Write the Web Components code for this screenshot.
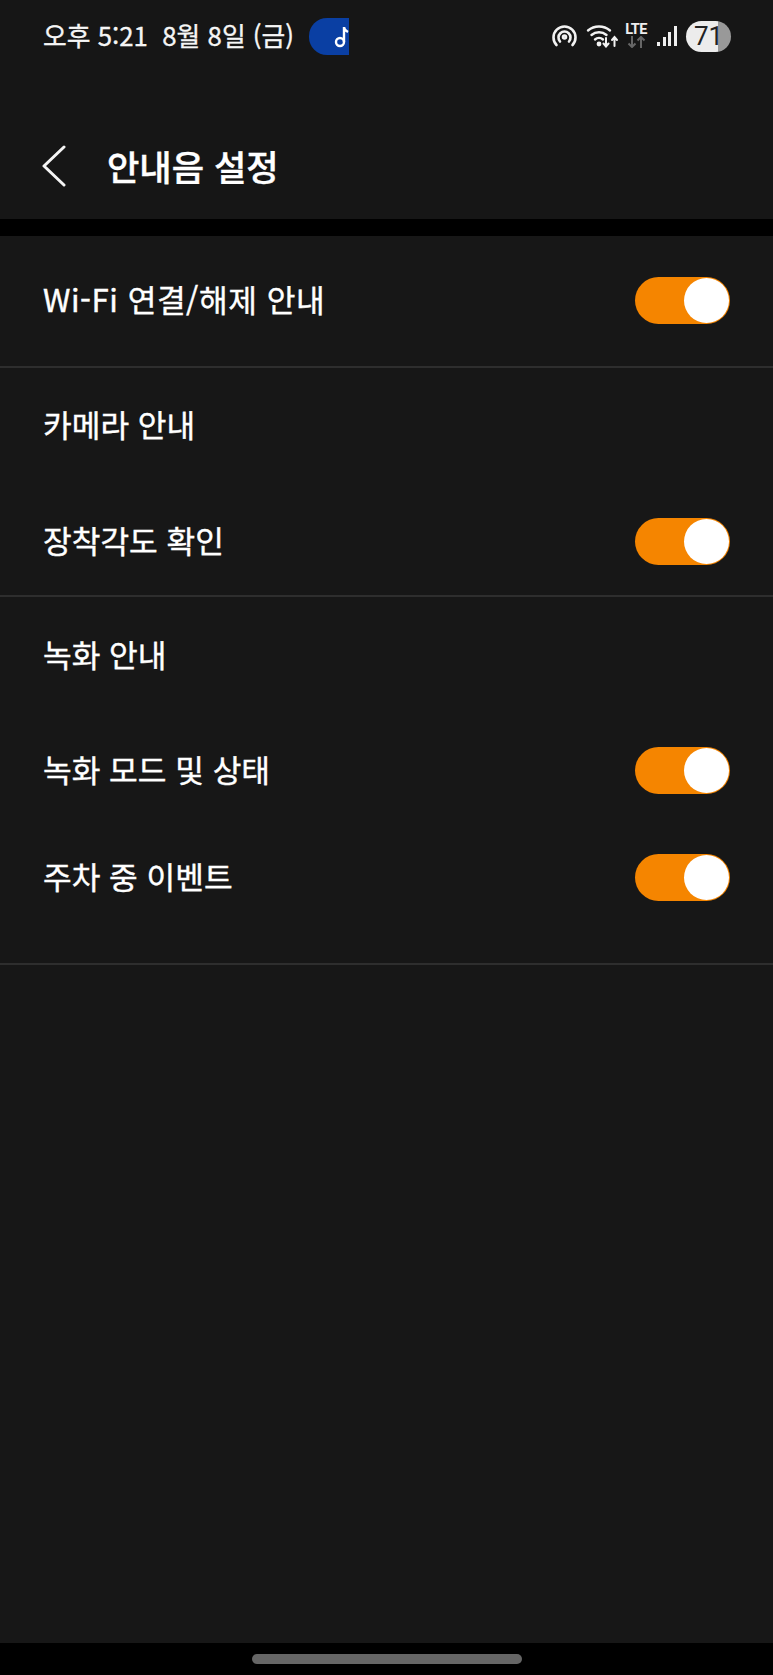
<!DOCTYPE html>
<html lang="ko">
<head>
<meta charset="utf-8">
<style>
  html, body { margin: 0; background: #000; }
  body { font-family: "Noto Sans CJK KR", "Noto Sans", sans-serif; color: #fff; }
  settings-screen { height: 1675px; }
</style>
</head>
<body>
<settings-screen>
  <status-bar slot="status"></status-bar>
  <app-bar slot="bar">안내음 설정</app-bar>
  <settings-group style="--h:130px">
    <setting-row label="Wi-Fi 연결/해제 안내" style="--row:129px;--ls:.55px"></setting-row>
  </settings-group>
  <settings-group style="--h:227px">
    <group-title style="--top:27px">카메라 안내</group-title>
    <setting-row label="장착각도 확인" style="--row:115px;--top:31px"></setting-row>
  </settings-group>
  <settings-group style="--h:366px">
    <group-title style="--top:28px">녹화 안내</group-title>
    <setting-row label="녹화 모드 및 상태" style="--row:109px;--top:33px"></setting-row>
    <setting-row label="주차 중 이벤트" style="--row:105px"></setting-row>
  </settings-group>
</settings-screen>
<script>
class SettingsScreen extends HTMLElement {
    constructor() {
        super();
        this.attachShadow({ mode: 'open' });
        this.shadowRoot.innerHTML = `
            <style>
                :host { display: flex; flex-direction: column; background: #000; }
                .top { height: 219px; background: #161616; display: flex; flex-direction: column; }
                .list { margin-top: 17px; flex: 1; background: #171717; display: flex; flex-direction: column; }
                .nav { height: 32px; background: #000; display: flex; justify-content: center; padding-top: 11px; box-sizing: border-box; }
                .pill { width: 270px; height: 10px; border-radius: 5px; background: #666; }
            </style>
            <div class="top"><slot name="status"></slot><slot name="bar"></slot></div>
            <div class="list"><slot></slot></div>
            <div class="nav"><div class="pill"></div></div>
        `;
    }
}

class StatusBar extends HTMLElement {
    constructor() {
        super();
        this.attachShadow({ mode: 'open' });
        this.shadowRoot.innerHTML = `
            <style>
                :host { display: flex; align-items: center; height: 72px; padding: 0 42px 0 43px; font-size: 25.8px; }
                .time { white-space: pre; -webkit-text-stroke: .3px #fff; color: #f4f4f4; line-height: 30px; padding-bottom: 2px; }
                .music { margin-left: 15px; width: 40px; height: 37px; border-radius: 18px 0 0 18px; background: #0a3fa3; display: flex; justify-content: flex-end; align-items: center; }
                .icons { margin-left: auto; display: flex; align-items: center; }
                svg { display: block; }
                .lte { width: 24px; height: 24px; margin-left: 5px; }
                .lte span { display: block; font: 700 14.5px/12px "Roboto", sans-serif; color: #eee; text-align: center; letter-spacing: -.6px; }
                .batt { margin-left: 9px; width: 45px; height: 31px; border-radius: 16px; overflow: hidden; background: linear-gradient(90deg, #ececec 0 32px, #999 32px); color: #222; font: 26px/31px "Roboto", sans-serif; text-align: center; }
            </style>
            <span class="time">오후 5:21  8월 8일 (금)</span>
            <div class="music">
                <svg width="17" height="24" viewBox="0 0 17 24" fill="none" stroke="#fff" stroke-width="2.4">
                    <circle cx="8" cy="18" r="4"/><path d="M12 18V3c0 3 2 4 4 5"/>
                </svg>
            </div>
            <div class="icons">
                <svg width="25" height="22" viewBox="0 0 25 22" fill="none" stroke="#f2f2f2" stroke-width="2.6" stroke-linecap="round">
                    <path d="M4.500 20A11 11 0 1 1 20.500 20"/><path d="M8 16.500a6 6 0 1 1 9 0"/><circle cx="12.500" cy="12" r="1.500"/>
                </svg>
                <svg width="34" height="24" viewBox="0 0 34 24" fill="none" stroke="#f2f2f2" stroke-width="2.4" stroke-linecap="round" style="margin-left:8px">
                    <path d="M3 6.500a17 17 0 0 1 22 0"/><path d="M6.500 11a11.500 11.500 0 0 1 15 0"/><path d="M10 15.500a6 6 0 0 1 8 0"/>
                    <circle cx="14" cy="20" r="1.200"/>
                    <path d="M21 14v8M18.500 19.500l2.500 3 2.500-3" stroke-width="2"/><path d="M29.500 22v-9M27 16l2.500-3 2.500 3" stroke-width="2"/>
                </svg>
                <div class="lte">
                    <span>LTE</span>
                    <svg width="24" height="12" viewBox="0 0 24 12" fill="none" stroke="#666" stroke-width="2">
                        <path d="M8 0v11M4.500 7.500 8 11l3.500-3.500"/><path d="M17 12V1M13.500 4.500 17 1l3.500 3.500"/>
                    </svg>
                </div>
                <svg width="21" height="24" viewBox="0 0 21 24" fill="#eee" style="margin-left:8px">
                    <rect x="1" y="18" width="3" height="4"/><rect x="7" y="13" width="3" height="9"/><rect x="12" y="8" width="3" height="14"/><rect x="18" y="2" width="3" height="20"/>
                </svg>
                <div class="batt">71</div>
            </div>
        `;
    }
}

class AppBar extends HTMLElement {
    constructor() {
        super();
        this.attachShadow({ mode: 'open' });
        this.shadowRoot.innerHTML = `
            <style>
                :host { display: flex; align-items: center; height: 100px; padding: 0 0 0 42px; margin-top: 44px; }
                svg { display: block; }
                .title { margin-left: 41px; font-size: 35.2px; line-height: 50px; font-weight: 500; -webkit-text-stroke: .4px #fff; }
            </style>
            <svg width="24" height="42" viewBox="0 0 24 42" fill="none" stroke="#f4f4f4" stroke-width="3" stroke-linecap="round" stroke-linejoin="round">
                <path d="M22 2 2 21l20 19"/>
            </svg>
            <span class="title"><slot></slot></span>
        `;
    }
}

class SettingsGroup extends HTMLElement {
    constructor() {
        super();
        this.attachShadow({ mode: 'open' });
        this.shadowRoot.innerHTML = `
            <style>
                :host { display: block; box-sizing: content-box; height: var(--h); border-bottom: 2px solid #2e2e2e; }
            </style>
            <slot></slot>
        `;
    }
}

class GroupTitle extends HTMLElement {
    constructor() {
        super();
        this.attachShadow({ mode: 'open' });
        this.shadowRoot.innerHTML = `
            <style>
                :host { display: block; padding: var(--top, 0) 43px 0; font-size: 31.2px; line-height: 58px; -webkit-text-stroke: .4px #fff; }
            </style>
            <slot></slot>
        `;
    }
}

class ToggleSwitch extends HTMLElement {
    constructor() {
        super();
        this.attachShadow({ mode: 'open' });
        this.shadowRoot.innerHTML = `
            <style>
                :host { display: flex; justify-content: flex-end; align-items: center; width: 95px; height: 47px; border-radius: 24px; background: #f58500; padding: 1px; box-sizing: border-box; }
                .knob { width: 45px; height: 45px; border-radius: 50%; background: #fff; }
            </style>
            <div class="knob"></div>
        `;
    }
}

class SettingRow extends HTMLElement {
    constructor() {
        super();
        this.attachShadow({ mode: 'open' });
        this.shadowRoot.innerHTML = `
            <style>
                :host { display: flex; align-items: center; justify-content: space-between; height: var(--row); margin-top: var(--top, 0); padding: 0 43px; font-size: 31.2px; }
                .label { line-height: 44px; padding-bottom: 3px; letter-spacing: var(--ls, 0); -webkit-text-stroke: .4px #fff; }
            </style>
            <span class="label">${this.getAttribute('label')}</span>
            <toggle-switch></toggle-switch>
        `;
    }
}

customElements.define('settings-screen', SettingsScreen);
customElements.define('status-bar', StatusBar);
customElements.define('app-bar', AppBar);
customElements.define('settings-group', SettingsGroup);
customElements.define('group-title', GroupTitle);
customElements.define('toggle-switch', ToggleSwitch);
customElements.define('setting-row', SettingRow);
</script>
</body>
</html>
